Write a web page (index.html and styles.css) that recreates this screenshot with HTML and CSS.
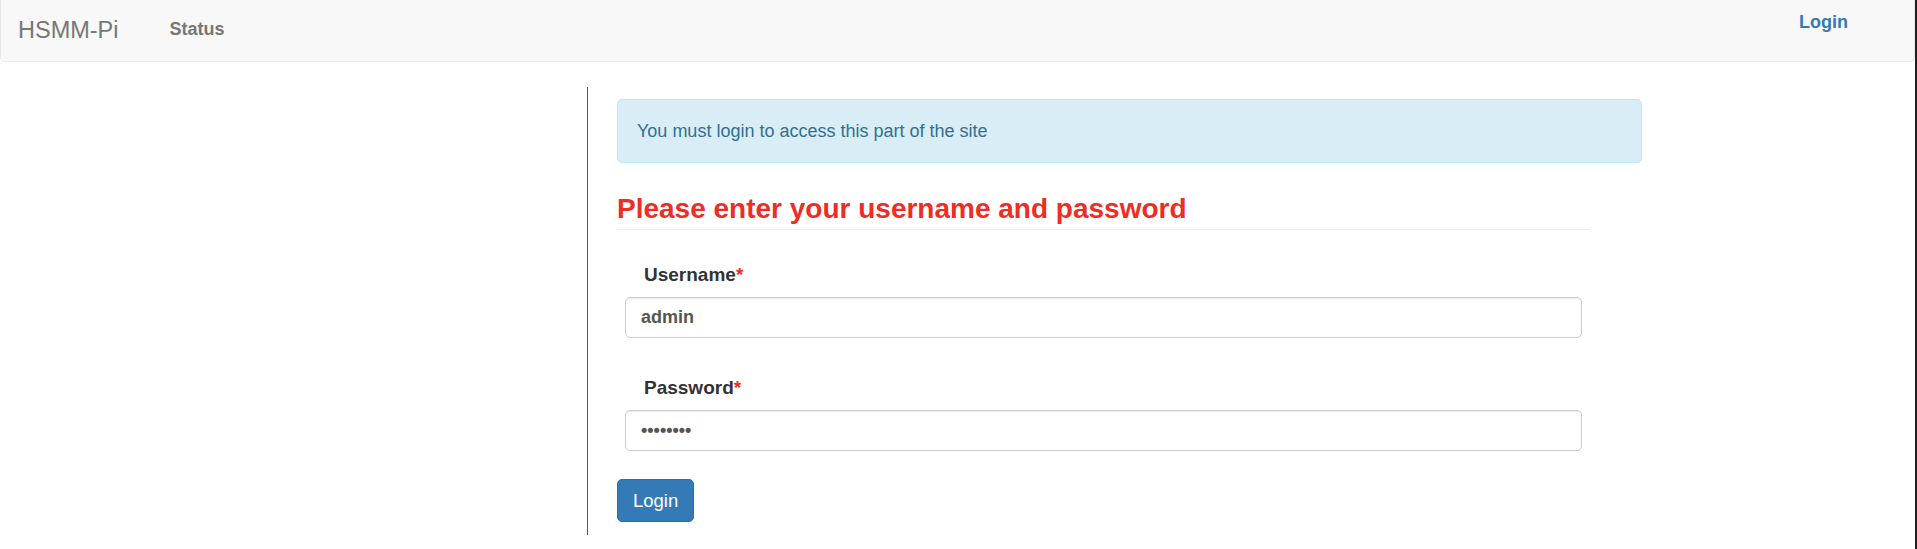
FILE: index.html
```html
<!DOCTYPE html>
<html lang="en">
<head>
<meta charset="utf-8">
<title>HSMM-Pi - Login</title>
<link rel="stylesheet" href="styles.css">
</head>
<body>
  <nav class="navbar">
    <a class="brand" href="#">HSMM-Pi</a>
    <a class="nav-link" href="#">Status</a>
    <a class="nav-login" href="#">Login</a>
  </nav>
  <div class="main">
    <div class="sidebar"></div>
    <div class="content">
      <div class="alert">You must login to access this part of the site</div>
      <h3 class="page-title">Please enter your username and password</h3>
      <form class="login-form">
        <div class="form-group first">
          <label class="control-label" for="username">Username<span class="required">*</span></label>
          <input class="form-control" id="username" type="text" value="admin">
        </div>
        <div class="form-group">
          <label class="control-label" for="password">Password<span class="required">*</span></label>
          <input class="form-control" id="password" type="password" value="password">
        </div>
        <button class="btn-primary" type="button">Login</button>
      </form>
    </div>
  </div>
</body>
</html>
```
FILE: styles.css
```css
html {
  background: #1f1f1f;
}
body {
  margin: 0;
  min-height: 100vh;
  box-sizing: border-box;
  border-right: 2px solid #1f1f1f;
  background: #ffffff;
  font-family: "Liberation Sans", Arial, sans-serif;
  font-size: 18px;
  color: #333333;
}
a {
  text-decoration: none;
}

/* navbar */
.navbar {
  display: flex;
  align-items: flex-start;
  height: 62px;
  box-sizing: border-box;
  background: #f8f8f8;
  border: 1px solid #e7e7e7;
  border-top: none;
  border-radius: 0 0 5px 5px;
  padding-left: 17px;
}
.brand {
  margin-top: 16px;
  font-size: 23.5px;
  line-height: 28px;
  color: #777777;
}
.nav-link {
  margin-top: 17px;
  margin-left: 51px;
  font-size: 18px;
  line-height: 25px;
  font-weight: bold;
  color: #777777;
}
.nav-login {
  margin-top: 10px;
  margin-left: auto;
  margin-right: 66px;
  font-size: 18px;
  line-height: 25px;
  font-weight: bold;
  color: #337ab7;
}

/* layout */
.main {
  display: flex;
  margin-top: 25px;
}
.sidebar {
  width: 587px;
  flex: none;
}
.content {
  width: 1025px;
  border-left: 1px solid #5a5a5a;
  padding: 12px 0 13px 29px;
}

/* alert */
.alert {
  box-sizing: border-box;
  padding: 18px 19px;
  line-height: 26px;
  font-size: 18px;
  background: #d9edf7;
  border: 1px solid #bce8f1;
  border-radius: 5px;
  color: #31708f;
}

/* heading */
.page-title {
  margin: 30px 52px 0 0;
  padding-bottom: 5px;
  border-bottom: 1px solid #eeeeee;
  font-size: 28px;
  line-height: 31px;
  font-weight: bold;
  color: #ee2d24;
}

/* form */
.login-form {
  margin: 0;
}
.form-group {
  padding: 0 60px 0 8px;
  margin-top: 37px;
}
.form-group.first {
  margin-top: 32px;
}
.control-label {
  display: block;
  padding-left: 19px;
  margin-bottom: 9px;
  font-size: 19px;
  line-height: 26px;
  font-weight: bold;
  color: #333333;
}
.required {
  color: #ee2d24;
}
.form-control {
  display: block;
  width: 100%;
  height: 41px;
  box-sizing: border-box;
  margin: 0;
  padding: 7px 15px;
  font-family: "Liberation Sans", Arial, sans-serif;
  font-size: 18px;
  line-height: 25px;
  font-weight: bold;
  color: #555555;
  background: #ffffff;
  border: 1px solid #cccccc;
  border-radius: 5px;
  box-shadow: inset 0 1px 1px rgba(0, 0, 0, 0.075);
}
.btn-primary {
  display: block;
  margin-top: 28px;
  padding: 7.5px 15px;
  font-family: "Liberation Sans", Arial, sans-serif;
  font-size: 18.5px;
  line-height: 26px;
  color: #ffffff;
  background: #337ab7;
  border: 1px solid #2e6da4;
  border-radius: 5px;
}
```
